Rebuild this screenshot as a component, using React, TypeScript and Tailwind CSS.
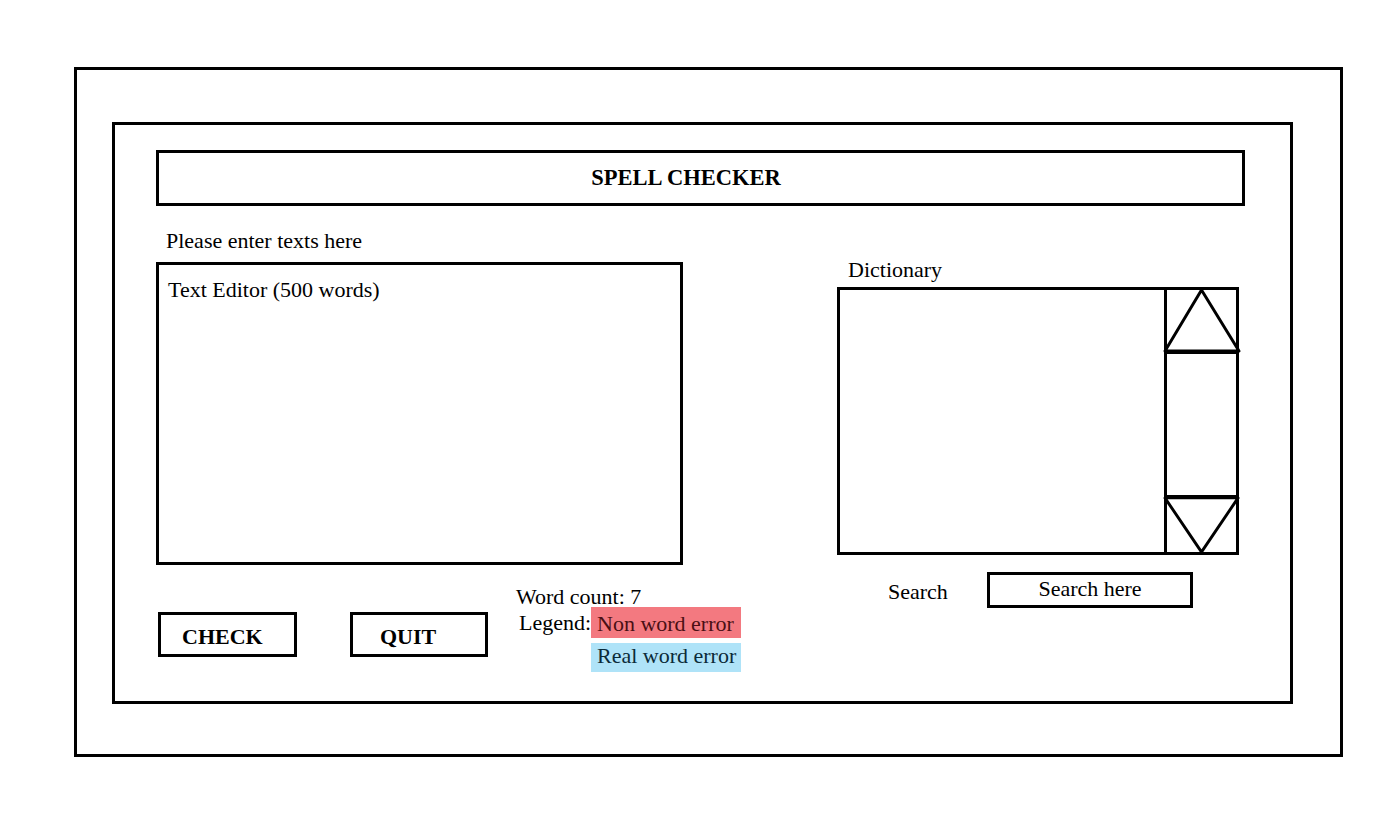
const serif = { fontFamily: '"Liberation Serif", "Times New Roman", serif' }

function Triangle({ down }: { down?: boolean }) {
  return (
    <svg
      className="w-full h-full overflow-visible block"
      viewBox="0 0 69 60"
      preserveAspectRatio="none"
    >
      <polygon
        points={down ? '-2,0 34.5,60 71,0' : '-2,60 34.5,0 72,60'}
        fill="none"
        stroke="#000"
        strokeWidth="3"
        strokeLinejoin="round"
      />
    </svg>
  )
}

function LegendChip({ label, className }: { label: string; className: string }) {
  return <div className={`w-[150px] pl-[6px] ${className}`}>{label}</div>
}

export default function App() {
  return (
    <div
      className="min-h-screen w-full bg-white pl-[74px] pt-[67px] text-[22px] text-black"
      style={serif}
    >
      <div className="w-[1269px] h-[690px] border-[3px] border-black pl-[35px] pt-[52px]">
        <div className="w-[1181px] h-[582px] border-[3px] border-black pl-[38px] pt-[25px]">

          {/* Title bar */}
          <div className="ml-[3px] w-[1089px] h-[56px] border-[3px] border-black flex items-center justify-center pr-[29px]">
            <span className="font-bold leading-none text-[22.5px]">SPELL CHECKER</span>
          </div>

          <div className="flex ml-[3px]">
            {/* Editor column */}
            <div className="w-[681px]">
              <div className="mt-[22px] mb-[9px] ml-[10px] leading-[25px]">Please enter texts here</div>
              <div className="w-[527px] h-[303px] border-[3px] border-black pl-[9px] pt-[12px] leading-[25px]">
                Text Editor (500 words)
              </div>

              <div className="flex items-start">
                <div className="mt-[47px] ml-[2px] flex gap-[53px]">
                  <button className="w-[139px] h-[45px] border-[3px] border-black text-left pl-[21px] pt-[4px] font-bold leading-none">
                    CHECK
                  </button>
                  <button className="w-[138px] h-[45px] border-[3px] border-black text-left pl-[27px] pt-[4px] font-bold leading-none">
                    QUIT
                  </button>
                </div>
                <div className="mt-[21px] ml-[28px]">
                  <div className="leading-[21px]">Word count: 7</div>
                  <div className="flex items-start">
                    <div className="ml-[3px] w-[72px] leading-[31px]">Legend:</div>
                    <div className="flex flex-col gap-[5px]">
                      <LegendChip label="Non word error" className="bg-[#f37980] text-[#4a0f14] h-[31px] leading-[31px] pt-[1px]" />
                      <LegendChip label="Real word error" className="bg-[#afe3f8] text-[#0b2b38] h-[29px] leading-[25px]" />
                    </div>
                  </div>
                </div>
              </div>
            </div>

            {/* Dictionary column */}
            <div className="w-[402px]">
              <div className="mt-[51px] mb-[5px] ml-[11px] leading-[25px]">Dictionary</div>
              <div className="w-[402px] h-[268px] border-[3px] border-black flex">
                <div className="flex-1" />
                <div className="w-[72px] border-l-[3px] border-black flex flex-col">
                  <div className="h-[64px] border-b-[3px] border-black">
                    <Triangle />
                  </div>
                  <div className="flex-1" />
                  <div className="h-[57px] border-t-[3px] border-black">
                    <Triangle down />
                  </div>
                </div>
              </div>

              <div className="flex items-center mt-[17px]">
                <div className="ml-[51px] w-[99px] leading-[25px] pt-[3px]">Search</div>
                <div className="w-[206px] h-[36px] border-[3px] border-black flex items-center justify-center pb-[3px] leading-none">
                  Search here
                </div>
              </div>
            </div>
          </div>

        </div>
      </div>
    </div>
  )
}
